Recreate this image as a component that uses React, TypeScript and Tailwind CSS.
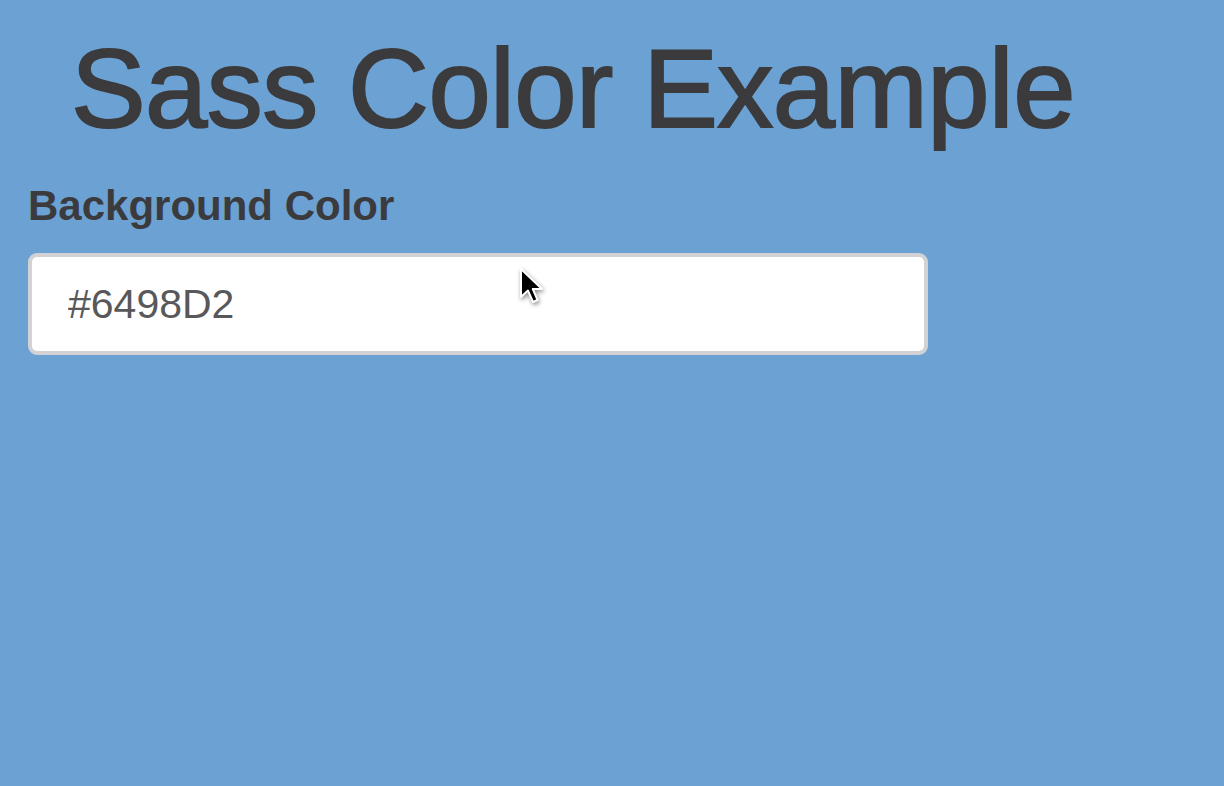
import React from 'react'

function Cursor() {
  return (
    <svg
      className="absolute left-[519px] top-[267px] drop-shadow-[1px_2px_2px_rgba(0,0,0,0.45)]"
      width="26"
      height="38"
      viewBox="0 0 13 19"
    >
      <path d="M1 1 L1 15 L4.5 11.8 L7 17.5 L9.3 16.5 L6.9 11 L11.5 11 Z" fill="#000" stroke="#fff" strokeWidth="1" strokeLinejoin="round" />
    </svg>
  )
}

export default function App() {
  return (
    <div className="relative min-h-[786px] w-full bg-[#6ca1d3] font-['Liberation_Sans',Arial,sans-serif]">
      <div className="flex flex-col pl-[28px] pt-[33px]">
        <h1 className="ml-[43px] text-[112px] leading-none font-normal text-[#3b3b3d] tracking-[-0.6px] [-webkit-text-stroke:2px_#3b3b3d]">
          Sass Color Example
        </h1>
        <label className="mt-[40px] text-[42px] leading-none font-bold text-[#3b3b3d]">
          Background Color
        </label>
        <input
          readOnly
          value="#6498D2"
          className="mt-[26px] box-border h-[102px] w-[900px] rounded-[9px] border-[4px] border-[#d2d2d4] bg-white pl-[36px] text-[41px] text-[#58585a] outline-none"
        />
      </div>
      <Cursor />
    </div>
  )
}
